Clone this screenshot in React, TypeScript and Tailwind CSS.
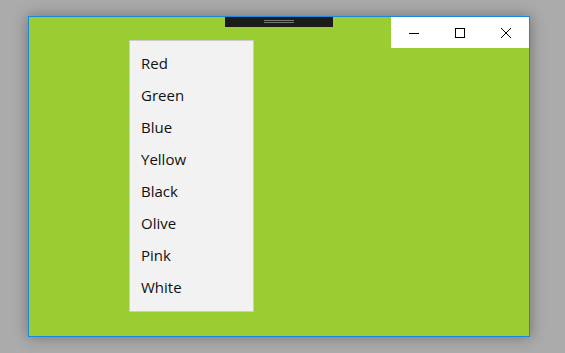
const colors = ["Red", "Green", "Blue", "Yellow", "Black", "Olive", "Pink", "White"]

function CaptionButtons() {
    return (
        <div className="absolute top-0 right-0 flex h-[31px] bg-white">
            <div className="w-[46px] flex items-center justify-center">
                <svg width="10" height="10" viewBox="0 0 10 10">
                    <path d="M0 5.5H10" stroke="#000" strokeWidth="1" />
                </svg>
            </div>
            <div className="w-[46px] flex items-center justify-center">
                <svg width="10" height="10" viewBox="0 0 10 10">
                    <rect x="0.5" y="0.5" width="9" height="9" fill="none" stroke="#000" strokeWidth="1" />
                </svg>
            </div>
            <div className="w-[46px] flex items-center justify-center">
                <svg width="10" height="10" viewBox="0 0 10 10">
                    <path d="M0 0L10 10M10 0L0 10" stroke="#000" strokeWidth="1" />
                </svg>
            </div>
        </div>
    )
}

export default function App() {
    return (
        <div className="w-[565px] h-[353px] bg-[#ababab] pt-[16px] pl-[28px] overflow-hidden font-['Open_Sans',sans-serif]">
            <div className="relative w-[502px] h-[321px] border border-[#1b86dc] bg-[#9acd32] shadow-[0_0_14px_rgba(0,0,0,0.35)]">
                {/* drag handle */}
                <div className="absolute top-0 left-[196px] w-[108px] h-[10px] bg-[#1b1b1b] flex flex-col items-center pt-[3px] gap-[1px]">
                    <div className="w-[30px] h-px bg-[#7a7a7a]" />
                    <div className="w-[30px] h-px bg-[#7a7a7a]" />
                </div>

                <CaptionButtons />

                <ul className="absolute left-[100px] top-[23px] w-[125px] h-[272px] bg-[#f2f2f2] border border-[#cccccc] pt-[6px] pl-[11px]">
                    {colors.map((c) => (
                        <li key={c} className="h-8 leading-8 text-[15px] text-[#111]">
                            {c}
                        </li>
                    ))}
                </ul>
            </div>
        </div>
    )
}
